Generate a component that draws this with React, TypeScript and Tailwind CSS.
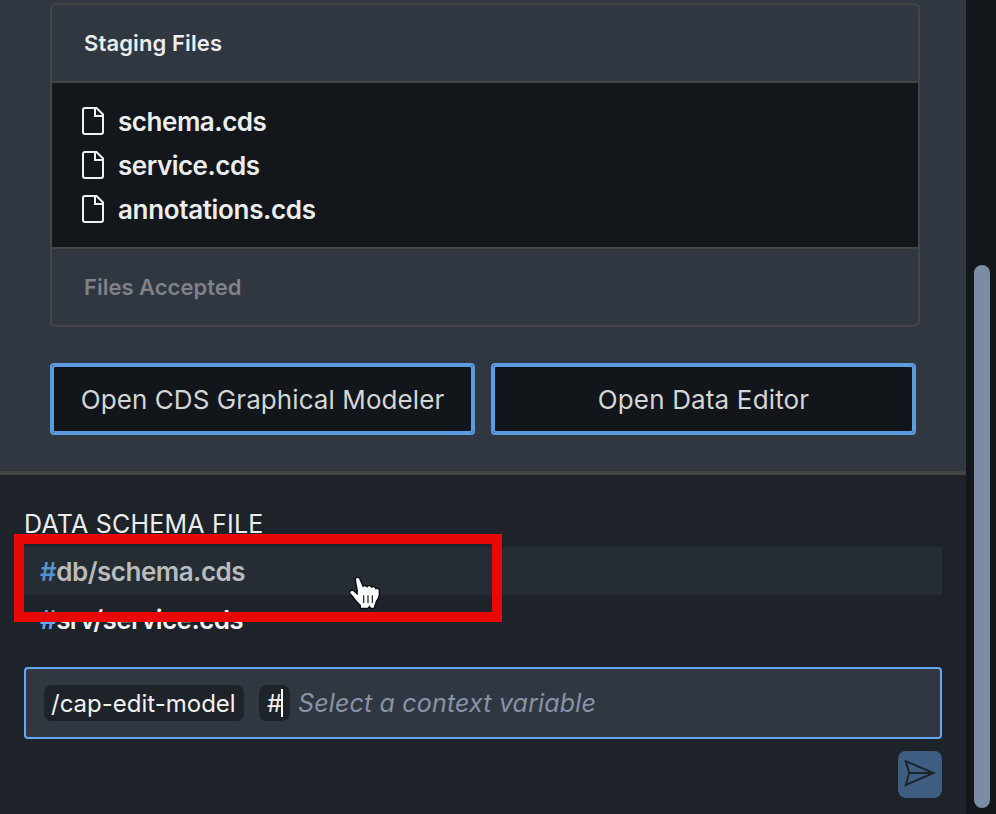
const stagedFiles = [
  { name: "schema.cds", spacing: "tracking-[-0.46px]" },
  { name: "service.cds", spacing: "tracking-[-0.5px]" },
  { name: "annotations.cds", spacing: "tracking-[-0.34px]" },
];

function FileIcon() {
  return (
    <svg className="h-7 w-[22px] shrink-0" viewBox="0 0 22 28" fill="none" stroke="#f0f1f1" strokeWidth="2">
      <path d="M3 1H14.5L21 7.5V25Q21 27 19 27H3Q1 27 1 25V3Q1 1 3 1Z" />
      <path d="M13 1V9H21" />
    </svg>
  );
}

function SendIcon() {
  return (
    <svg className="h-[30px] w-8" viewBox="0 0 32 30" fill="none" stroke="#1b2530" strokeWidth="2">
      <path d="M1.8 3.2L29.5 15L1.8 27L5.2 15Z M5.2 15H29" />
    </svg>
  );
}

function HandCursor() {
  return (
    <svg className="absolute left-[346px] top-[575px] h-9 w-[35px] overflow-visible" viewBox="48 150 105 108">
      <path
        d="M79 160Q83 156 87 161L99 188Q102 181 108 185L112 188Q116 181 122 186L126 190Q130 184 135 189L136 194Q141 190 146 195V209Q144 221 137 229L131 248H123L119 241L113 248H93V241L78 225L70 214L60 203Q62 195 70 199L83 211L84 197L78 166Z"
        fill="#fff"
        stroke="#0b0d10"
        strokeWidth="8"
        strokeLinejoin="round"
        paintOrder="stroke"
      />
      <path d="M101 211V234M114 211V234M127 211V234" stroke="#16191d" strokeWidth="3.5" />
    </svg>
  );
}

function ActionButton({ children, spacing }: { children: string; spacing: string }) {
  return (
    <button className="h-[72px] w-[425px] rounded-[4px] border-2 border-[#5c9be0] bg-[#313741]">
      <span className="flex h-full items-center justify-center rounded-[3px] border-2 border-[#5c9be0] bg-[#12161a] pt-0.5">
        <span className={"whitespace-nowrap text-[26px] leading-8 text-[#d3d5d6] " + spacing}>{children}</span>
      </span>
    </button>
  );
}

export default function App() {
  return (
    <div className="relative flex h-[814px] w-[996px] overflow-hidden bg-[#13171b] font-['Inter','Liberation_Sans',sans-serif]">
      <main className="flex w-[966px] shrink-0 flex-col bg-[#1e2229]">
        <section className="h-[475px] border-b-4 border-[#444444] bg-[#313741] pl-[50px] pt-[3px]">
          <div className="flex h-[324px] w-[870px] flex-col overflow-hidden rounded-[6px] border-2 border-[#444444]">
            <div className="flex h-[78px] items-center border-b-2 border-[#444444] px-8">
              <h2 className="text-[22px] font-semibold leading-7 tracking-[0.12px] text-[#eceded]">Staging Files</h2>
            </div>
            <ul className="h-[164px] bg-[#13171b] px-[30px] py-4">
              {stagedFiles.map((file) => (
                <li key={file.name} className="flex h-11 items-center gap-[14px]">
                  <FileIcon />
                  <span className={"pt-0.5 text-[26px] font-semibold leading-8 text-[#eceded] " + file.spacing}>{file.name}</span>
                </li>
              ))}
            </ul>
            <div className="flex h-[78px] items-center border-t-2 border-[#444444] px-8">
              <span className="text-[22px] font-semibold leading-7 text-[#7f8287]">Files Accepted</span>
            </div>
          </div>
          <div className="mt-9 flex gap-4">
            <ActionButton spacing="tracking-[0.08px]">Open CDS Graphical Modeler</ActionButton>
            <ActionButton spacing="tracking-[0.16px]">Open Data Editor</ActionButton>
          </div>
        </section>
        <section className="flex flex-col px-6 pt-8">
          <h3 className="h-10 text-[25px] leading-[34px] tracking-[0.22px] text-[#eceded]">DATA SCHEMA FILE</h3>
          <div className="flex h-12 items-center bg-[#262c33] px-4 pt-0.5 text-[26px] font-semibold leading-8 tracking-[-0.5px] text-[#b9bbbc]">
            <span className="text-[#5790cf]">#</span>
            <span>db/schema.cds</span>
          </div>
          <div className="flex h-12 items-center px-4 pt-0.5 text-[26px] font-semibold leading-8 tracking-[-0.58px] text-[#f0f1f1]">
            <span className="text-[#64a8f7]">#</span>
            <span>srv/service.cds</span>
          </div>
          <div className="mt-6 flex h-[72px] items-center rounded-[4px] border-2 border-[#62a8f5] bg-[#313741] pl-[18px] text-[24px]">
            <span className="flex h-9 w-[200px] items-center whitespace-nowrap rounded-lg bg-[#1e2229] pl-[7px] pt-0.5 text-[#f0f1f1]">/cap-edit-model</span>
            <span className="ml-[15px] flex h-9 w-[31px] items-center rounded-lg bg-[#1e2229] pl-2 text-[#f0f1f1]">
              <span className="w-[14px] pt-0.5">#</span>
              <span className="h-7 w-0.5 shrink-0 bg-white" />
            </span>
            <span className="ml-2 whitespace-nowrap pt-px text-[25px] italic tracking-[0.17px] text-[#8693a8]">Select a context variable</span>
          </div>
          <button className="mt-3 flex h-[47px] w-11 items-center justify-center self-end rounded-lg bg-[#3e5d80] pb-1" aria-label="Send">
            <SendIcon />
          </button>
        </section>
      </main>
      <aside className="flex w-[30px] pl-2 pt-[265px]">
        <div className="h-[543px] w-4 shrink-0 rounded-full bg-[#7b8da5]" />
      </aside>
      <div className="pointer-events-none absolute left-[14px] top-[534px] h-[88px] w-[488px] border-[10px] border-[#e90808]" />
      <HandCursor />
    </div>
  );
}
